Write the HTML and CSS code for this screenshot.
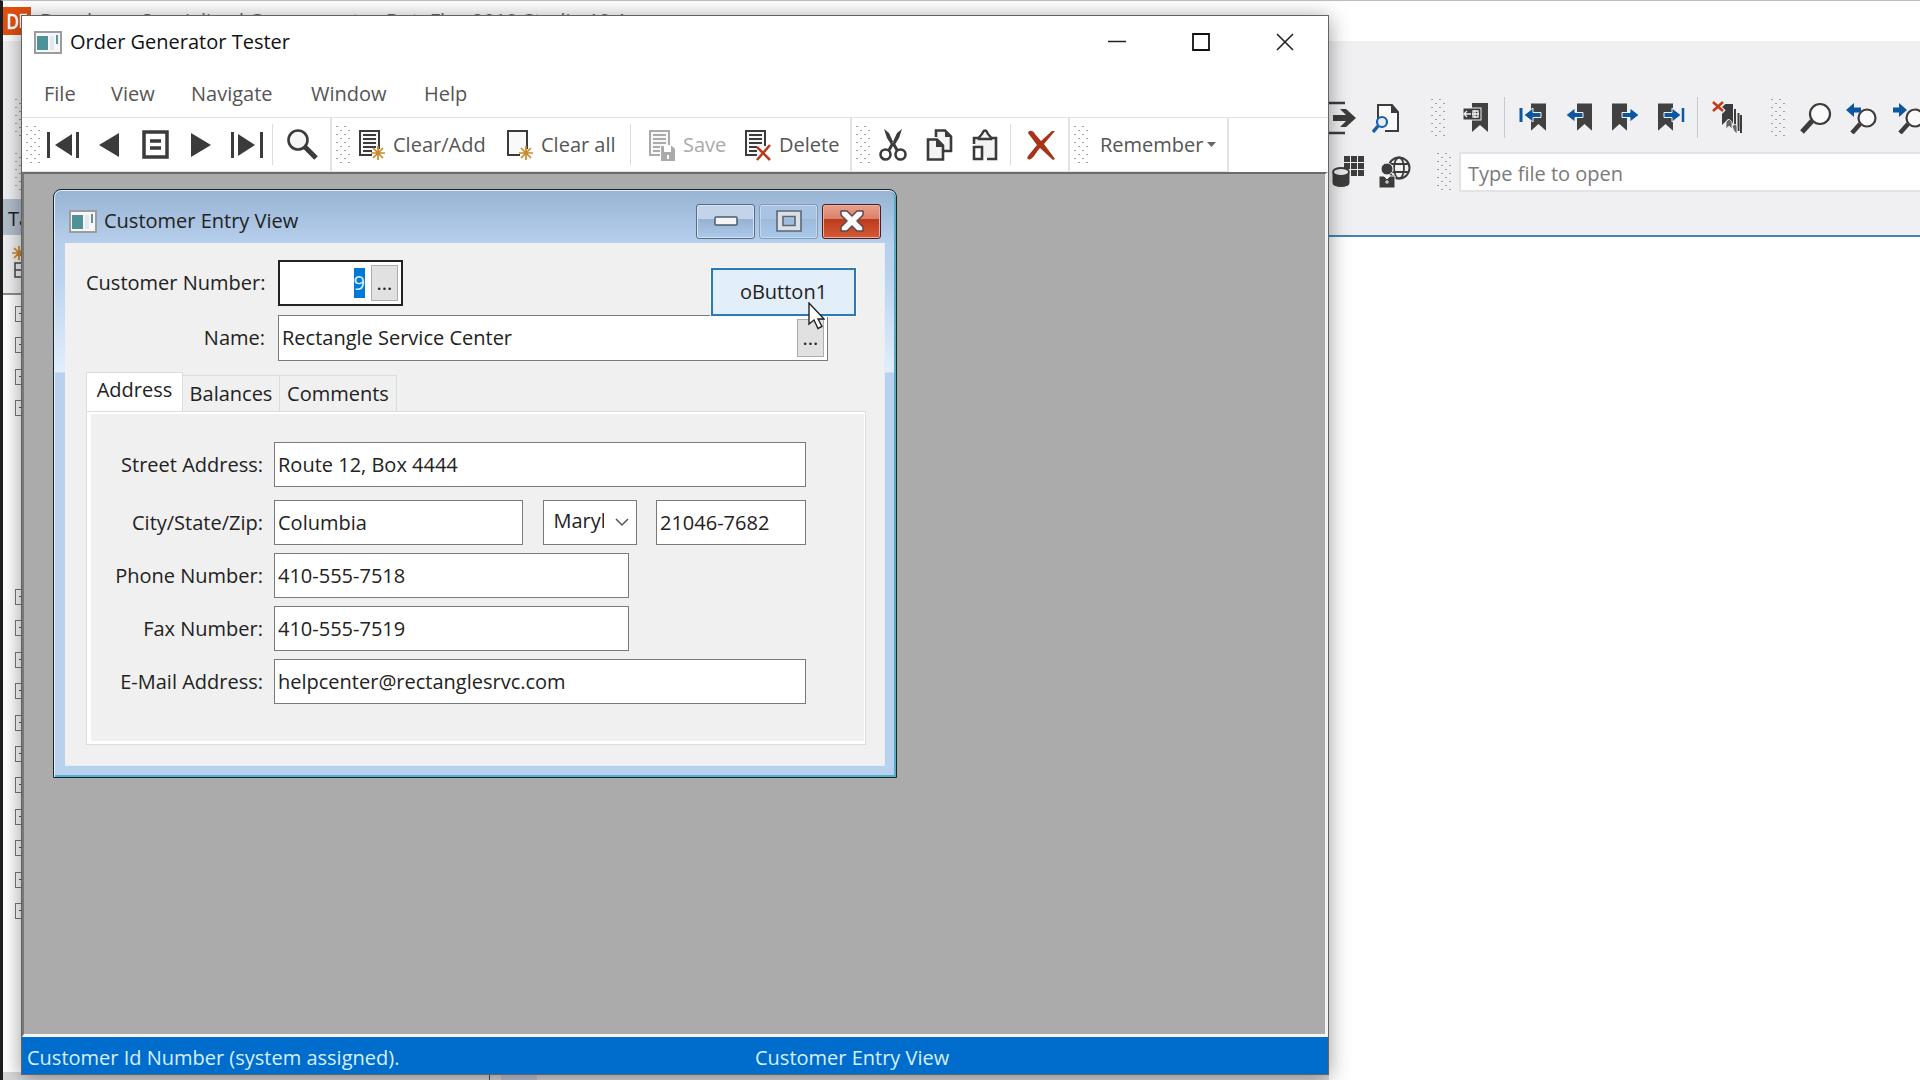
FILE: index.html
```html
<!DOCTYPE html>
<html lang="en">
<head>
<meta charset="utf-8">
<title>Order Generator Tester</title>
<link rel="stylesheet" href="styles.css">
</head>
<body>
<svg width="0" height="0" class="defs" aria-hidden="true">
  <defs>
    <symbol id="appicon" viewBox="0 0 28 23">
      <rect x="1" y="1" width="26" height="21" fill="#f4f6f8" stroke="#9c9c9c" stroke-width="2"/>
      <rect x="3" y="5" width="11" height="14" fill="#4c9297"/>
      <rect x="16" y="5" width="4" height="14" fill="#e3e7ee"/>
      <rect x="22" y="4" width="2" height="9" fill="#5f9396"/>
    </symbol>
    <symbol id="star" viewBox="0 0 14 14">
      <path d="M7 0v14M0 7h14M2 2l10 10M12 2L2 12" stroke="#c98a2b" stroke-width="1.7" fill="none"/>
    </symbol>
    <symbol id="sheet" viewBox="0 0 28 32">
      <path d="M2 2h19v24H2z" fill="#f7f7f7" stroke="currentColor" stroke-width="2"/>
      <path d="M5 6h13M5 10h13M5 14h13M5 18h13M5 22h9" stroke="currentColor" stroke-width="1.8"/>
    </symbol>
    <symbol id="bookmark" viewBox="0 0 16 30">
      <path d="M0 0h16v29l-8-7-8 7z" fill="#414141"/>
    </symbol>
    <pattern id="dots" width="8" height="8" patternUnits="userSpaceOnUse">
      <rect x="0" y="1" width="2" height="1" fill="#a0a0a0"/>
      <rect x="4" y="5" width="2" height="1" fill="#a0a0a0"/>
    </pattern>
  </defs>
</svg>

<div class="ide">
  <header class="ide-title">
    <svg class="ide-logo" viewBox="0 0 28 28" aria-hidden="true"><rect width="28" height="28" fill="#e2500f"/><path d="M6 8v13h3c4 0 5-3 5-6.500S13 8 9 8zM24 8h-6v13M18 14h5" fill="none" stroke="#fff" stroke-width="2.500"/></svg>
    <span>Developer Specialized Components - DataFlex 2019 Studio 19.1</span>
  </header>
  <div class="ide-bars">
    <div class="ide-row">
      <svg class="grip edge"><rect width="14" height="40" fill="url(#dots)"/></svg>
      <div class="ide-tools">
        <button class="ide-btn lead" aria-label="Go to"><svg width="34" height="34" viewBox="0 0 34 34"><path d="M0 2h18M0 32h18" stroke="#3c3c3c" stroke-width="2.500"/><path d="M6 14h13l-6-6h6l10 9-10 9h-6l6-6H6z" fill="#3c3c3c"/></svg></button>
        <button class="ide-btn" aria-label="Preview"><svg width="28" height="30" viewBox="0 0 28 30"><path d="M6 16V2h14l6 7v19H13" fill="#fafafa" stroke="#3c3c3c" stroke-width="2"/><path d="M19 1v9h8z" fill="#3c3c3c"/><circle cx="10" cy="19" r="5" fill="#e6eef8" stroke="#1b5faa" stroke-width="2.200"/><path d="M6 23l-5 6" stroke="#1b5faa" stroke-width="3.500"/></svg></button>
        <svg class="grip mid first"><rect width="14" height="40" fill="url(#dots)"/></svg>
        <button class="ide-btn" aria-label="Toggle bookmark"><svg width="28" height="30" viewBox="0 0 28 30"><use href="#bookmark" x="9" width="18" height="30"/><rect x="1" y="5" width="18" height="12" fill="#3c3c3c" stroke="#f2f2f2"/><path d="M3 11h6M5 8l-3 3 3 3M11 8h5v6h-5zM13 7v8M10 11h7" stroke="#f2f2f2" stroke-width="1.300" fill="none"/></svg></button>
        <span class="ide-sep"></span>
        <button class="ide-btn" aria-label="First bookmark"><svg width="28" height="30" viewBox="0 0 28 30"><use href="#bookmark" x="12" width="15" height="29"/><path d="M2 5v14" stroke="#0d56a0" stroke-width="3"/><path d="M22 9.500h-8V5L5 12l9 7v-4.500h8z" fill="#0d56a0" stroke="#f0f0f2"/></svg></button>
        <button class="ide-btn" aria-label="Previous bookmark"><svg width="28" height="30" viewBox="0 0 28 30"><use href="#bookmark" x="12" width="15" height="29"/><path d="M18 9.500h-8V5L1 12l9 7v-4.500h8z" fill="#0d56a0" stroke="#f0f0f2"/></svg></button>
        <button class="ide-btn" aria-label="Next bookmark"><svg width="28" height="30" viewBox="0 0 28 30"><use href="#bookmark" x="1" width="15" height="29"/><path d="M11 9.500h8V5l9 7-9 7v-4.500h-8z" fill="#0d56a0" stroke="#f0f0f2"/></svg></button>
        <button class="ide-btn" aria-label="Last bookmark"><svg width="28" height="30" viewBox="0 0 28 30"><use href="#bookmark" x="1" width="15" height="29"/><path d="M7 9.500h8V5l9 7-9 7v-4.500H7z" fill="#0d56a0" stroke="#f0f0f2"/><path d="M26 5v14" stroke="#0d56a0" stroke-width="2.500"/></svg></button>
        <span class="ide-sep tight"></span>
        <button class="ide-btn wide" aria-label="Clear bookmarks"><svg width="30" height="34" viewBox="0 0 30 34"><path d="M10 3h11v20l-5-5-6 6z" fill="#3c3c3c"/><path d="M23 8v20M26.500 12v18M29 14v18" stroke="#3c3c3c" stroke-width="2"/><path d="M14 21l3-3 3 3v7l-3-3-3 3zM20 25l3-2 2 2v8l-3-3z" fill="#666" stroke="#f0f0f2" stroke-width=".8"/><path d="M1 1l11 10M12 1L1 11" stroke="#f0f0f2" stroke-width="5"/><path d="M1 1l10 9M11 1L1 10" stroke="#c23b17" stroke-width="2.500"/></svg></button>
        <svg class="grip mid"><rect width="14" height="40" fill="url(#dots)"/></svg>
        <button class="ide-btn" aria-label="Find"><svg width="32" height="32" viewBox="0 0 32 32"><circle cx="20" cy="12" r="10" fill="#fafafa" stroke="#3c3c3c" stroke-width="2.200"/><path d="M12 19L2 30" stroke="#3c3c3c" stroke-width="5"/></svg></button>
        <button class="ide-btn" aria-label="Find previous"><svg width="32" height="32" viewBox="0 0 32 32"><circle cx="21" cy="16" r="8.500" fill="#fafafa" stroke="#3c3c3c" stroke-width="2.200"/><path d="M14 22l-8 9" stroke="#3c3c3c" stroke-width="4.500"/><path d="M15 5.500H8V1L0 8l8 7v-4.500h7z" fill="#0d56a0"/></svg></button>
        <button class="ide-btn" aria-label="Find next"><svg width="32" height="32" viewBox="0 0 32 32"><circle cx="23" cy="16" r="8.500" fill="#fafafa" stroke="#3c3c3c" stroke-width="2.200"/><path d="M16 22l-8 9" stroke="#3c3c3c" stroke-width="4.500"/><path d="M1 5.500h6V1l8 7-8 7v-4.500H1z" fill="#0d56a0"/></svg></button>
      </div>
    </div>
    <div class="ide-row second">
      <svg class="grip edge"><rect width="14" height="40" fill="url(#dots)"/></svg>
      <div class="ide-tools">
        <button class="ide-btn" aria-label="Database"><svg width="34" height="34" viewBox="0 0 34 34"><path d="M13 1h6v6h-6zM20 1h6v6h-6zM27 1h6v6h-6zM20 8h6v6h-6zM27 8h6v6h-6zM27 15h6v6h-6zM20 15h6v6h-6zM13 8h6v6h-6z" fill="#3c3c3c"/><path d="M1 17v11c0 6 18 6 18 0V17z" fill="#3c3c3c" stroke="#f0f0f2"/><ellipse cx="10" cy="17" rx="8" ry="4" fill="#e8e8ea" stroke="#3c3c3c" stroke-width="1.800"/></svg></button>
        <button class="ide-btn" aria-label="Web user"><svg width="34" height="34" viewBox="0 0 34 34"><circle cx="22" cy="13" r="10.500" fill="#f0f0f2" stroke="#3c3c3c" stroke-width="2"/><ellipse cx="22" cy="13" rx="5" ry="10.500" fill="none" stroke="#3c3c3c" stroke-width="1.800"/><path d="M12 9h20M12 17h20" stroke="#3c3c3c" stroke-width="1.800"/><circle cx="10" cy="14" r="6" fill="#3c3c3c" stroke="#f0f0f2"/><path d="M2 21h5l3 3 3-3h5v12H2z" fill="#3c3c3c" stroke="#f0f0f2"/><path d="M8 27h4M10 25v4" stroke="#f0f0f2"/></svg></button>
        <svg class="grip mid open"><rect width="14" height="40" fill="url(#dots)"/></svg>
        <input class="ide-open" type="text" placeholder="Type file to open" aria-label="Type file to open">
      </div>
    </div>
  </div>
  <div class="ide-body">
    <aside class="ide-side">
      <div class="side-head">Ta</div>
      <div class="side-tools"><svg width="19" height="34" viewBox="0 0 19 34"><use href="#star" x="9" y="1" width="14" height="14"/><path d="M19 18h-7v14h7M12 25h7" fill="none" stroke="#444" stroke-width="1.500"/></svg></div>
      <div class="tree"><i></i><i></i><i></i><i></i></div>
      <div class="tree low"><i></i><i></i><i></i><i></i><i></i><i></i><i></i><i></i><i></i><i></i><i></i></div>
    </aside>
    <div class="ide-editor"></div>
  </div>
  <footer class="ide-foot"><span></span></footer>
</div>

<main class="win">
  <header class="win-title">
    <svg class="appicon" aria-hidden="true"><use href="#appicon"/></svg>
    <h1>Order Generator Tester</h1>
    <button class="cap" aria-label="Minimize"><svg width="18" height="18" viewBox="0 0 18 18"><path d="M0 8.500h18" stroke="#222" stroke-width="1.500"/></svg></button>
    <button class="cap" aria-label="Maximize"><svg width="18" height="18" viewBox="0 0 18 18"><path d="M1 1h16v16H1z" fill="none" stroke="#111" stroke-width="1.800"/></svg></button>
    <button class="cap" aria-label="Close"><svg width="18" height="18" viewBox="0 0 18 18"><path d="M1 1l16 16M17 1L1 17" stroke="#222" stroke-width="1.600"/></svg></button>
  </header>
  <nav class="menu">
    <button class="m-file">File</button><button class="m-view">View</button><button class="m-nav">Navigate</button><button class="m-window">Window</button><button class="m-help">Help</button>
  </nav>
  <div class="bars">
    <div class="group">
      <svg class="grip"><rect width="14" height="40" fill="url(#dots)"/></svg>
      <button class="tool" aria-label="First"><svg width="32" height="28" viewBox="0 0 32 28"><path d="M1.500 1v26M30.500 1v26" stroke="#3b3b3b" stroke-width="3"/><path d="M25 3v22L8 14z" fill="#3b3b3b"/></svg></button>
      <button class="tool" aria-label="Previous"><svg width="20" height="24" viewBox="0 0 20 24"><path d="M20 0v24L0 12z" fill="#3b3b3b"/></svg></button>
      <button class="tool" aria-label="List"><svg width="27" height="29" viewBox="0 0 27 29"><path d="M2 2h23v25H2z" fill="none" stroke="#3b3b3b" stroke-width="3.500"/><path d="M8 11h11M8 18h11" stroke="#3b3b3b" stroke-width="3.500"/></svg></button>
      <button class="tool" aria-label="Next"><svg width="20" height="24" viewBox="0 0 20 24"><path d="M0 0v24l20-12z" fill="#3b3b3b"/></svg></button>
      <button class="tool" aria-label="Last"><svg width="32" height="28" viewBox="0 0 32 28"><path d="M1.500 1v26M30.500 1v26" stroke="#3b3b3b" stroke-width="3"/><path d="M7 3v22l17-11z" fill="#3b3b3b"/></svg></button>
      <span class="sep"></span>
      <button class="tool big" aria-label="Find"><svg width="31" height="31" viewBox="0 0 31 31"><circle cx="11" cy="11" r="9.500" fill="#f6f6f6" stroke="#3b3b3b" stroke-width="2.600"/><path d="M17 17l12 12" stroke="#3b3b3b" stroke-width="5"/></svg></button>
    </div>
    <div class="group">
      <svg class="grip"><rect width="14" height="40" fill="url(#dots)"/></svg>
      <button class="ltool w-add"><svg width="28" height="32" viewBox="0 0 28 32"><use href="#sheet"/><path d="M14 20h14v12H14z" fill="#fff"/><use href="#star" x="13" y="17" width="14" height="14"/></svg>Clear/Add</button>
      <button class="ltool w-all"><svg width="28" height="32" viewBox="0 0 28 32"><path d="M2 2h19v24H2z" fill="#f9f9f9" stroke="#3b3b3b" stroke-width="2"/><path d="M14 20h14v12H14z" fill="#fff"/><use href="#star" x="13" y="17" width="14" height="14"/></svg>Clear all</button>
      <span class="sep gap"></span>
      <button class="ltool w-save" disabled><svg width="28" height="32" viewBox="0 0 28 32"><use href="#sheet"/><path d="M12 16h16v16H12z" fill="#fff"/><path d="M13 17h11l3 3v12H13z" fill="currentColor"/><path d="M16 17h7v6h-7z" fill="#fff"/><path d="M19 26h2v4h-2z" fill="#fff"/></svg>Save</button>
      <button class="ltool w-del"><svg width="28" height="32" viewBox="0 0 28 32"><use href="#sheet"/><path d="M13 17h12v12H13z" fill="#fff"/><path d="M13 18l13 13M26 16L13 31" stroke="#b93a1e" stroke-width="2.500"/></svg>Delete</button>
    </div>
    <div class="group">
      <svg class="grip"><rect width="14" height="40" fill="url(#dots)"/></svg>
      <button class="tool" aria-label="Cut"><svg width="28" height="32" viewBox="0 0 28 32"><path d="M5 0l3 9 5 8h3L10 4zM23 0l-3 9-5 8h-3l6-13z" fill="#3b3b3b"/><path d="M14 14l-4 7M14 14l4 7" stroke="#3b3b3b" stroke-width="3"/><circle cx="6.500" cy="25.500" r="5" fill="none" stroke="#3b3b3b" stroke-width="2.600"/><circle cx="21.500" cy="25.500" r="5" fill="none" stroke="#3b3b3b" stroke-width="2.600"/></svg></button>
      <button class="tool" aria-label="Copy"><svg width="27" height="32" viewBox="0 0 27 32"><path d="M10 8V1.500h9l6 6V22h-7" fill="#f3f3f3" stroke="#3b3b3b" stroke-width="2.600"/><path d="M19 1v7h7z" fill="#3b3b3b"/><path d="M2 10.500h9l6 6v14H2z" fill="#f3f3f3" stroke="#3b3b3b" stroke-width="2.600"/><path d="M10 10v8h8z" fill="#3b3b3b"/></svg></button>
      <button class="tool" aria-label="Paste"><svg width="26" height="32" viewBox="0 0 26 32"><path d="M2 15V9h22v21h-9" fill="#f3f3f3" stroke="#3b3b3b" stroke-width="2.600"/><path d="M7 10c0-4 3-3 4-7 1-2 3-2 4 0 1 4 4 3 4 7z" fill="#f3f3f3" stroke="#3b3b3b" stroke-width="2.500"/><path d="M2 18h8v12H2z" fill="#fff" stroke="#3b3b3b" stroke-width="2.600"/></svg></button>
      <span class="sep"></span>
      <button class="tool big" aria-label="Cancel"><svg width="30" height="30" viewBox="0 0 30 30"><path d="M2 3c1-4 6-2 7 1l6 7 11-10h3L18 14l11 15-2 1-13-12C10 22 9 26 6 28c-3 3-6 1-4-2l9-11z" fill="#a6331a"/></svg></button>
    </div>
    <div class="group">
      <svg class="grip"><rect width="14" height="40" fill="url(#dots)"/></svg>
      <button class="ltool w-rem">Remember<svg width="9" height="5" viewBox="0 0 9 5"><path d="M0 0h9L4.500 5z" fill="#666"/></svg></button>
    </div>
  </div>

  <div class="mdi">
    <section class="view">
      <header class="view-title">
        <svg class="appicon" aria-hidden="true"><use href="#appicon"/></svg>
        <h2>Customer Entry View</h2>
        <button class="vcap strong" aria-label="Minimize view"><svg width="24" height="10" viewBox="0 0 24 10"><rect x="1" y="1" width="22" height="8" rx="1" fill="#f5f5f5" stroke="#4d5a6b" stroke-width="1.500"/></svg></button>
        <button class="vcap" aria-label="Maximize view"><svg width="26" height="22" viewBox="0 0 26 22"><path d="M1 1h24v20H1zM7 6.500v9h12v-9z" fill="#dcdfe4" fill-rule="evenodd" stroke="#5c6776" stroke-width="1.600"/></svg></button>
        <button class="vcap close" aria-label="Close view"><svg width="26" height="22" viewBox="0 0 26 22"><path d="M2 1h6l5 5 5-5h6v4l-6 6 6 6v4h-6l-5-5-5 5H2v-4l6-6-6-6z" fill="#fafafa" stroke="#5b4a52" stroke-width="1.500" stroke-linejoin="round"/></svg></button>
      </header>
      <form class="view-body" onsubmit="return false">
        <div class="head">
          <label for="num">Customer Number:</label>
          <div class="prompt number"><input id="num" type="text" value="9"><button type="button" aria-label="Find customer number">...</button></div>
          <label for="name">Name:</label>
          <div class="prompt"><input id="name" type="text" value="Rectangle Service Center"><button type="button" aria-label="Find name">...</button></div>
        </div>
        <button class="obutton" type="button">oButton1</button>
        <svg class="cursor" viewBox="0 0 17 28" aria-hidden="true"><path d="M1 1v21l5-4 4 8.500 4-2-4-7.500h6z" fill="#fff" stroke="#222" stroke-width="1.400"/></svg>
        <div class="tabs" role="tablist">
          <button type="button" class="tab on" role="tab" aria-selected="true">Address</button><button type="button" class="tab t2" role="tab">Balances</button><button type="button" class="tab t3" role="tab">Comments</button>
        </div>
        <div class="page" role="tabpanel">
          <label for="street">Street Address:</label>
          <input id="street" class="field" type="text" value="Route 12, Box 4444">
          <label for="city" class="apart">City/State/Zip:</label>
          <div class="csz apart">
            <input id="city" class="field" type="text" value="Columbia">
            <div class="combo"><select aria-label="State"><option>Maryland</option></select><svg width="14" height="9" viewBox="0 0 14 9" aria-hidden="true"><path d="M1 1l6 6 6-6" fill="none" stroke="#555" stroke-width="1.500"/></svg></div>
            <input class="field" type="text" value="21046-7682" aria-label="Zip">
          </div>
          <label for="phone">Phone Number:</label>
          <input id="phone" class="field short" type="text" value="410-555-7518">
          <label for="fax">Fax Number:</label>
          <input id="fax" class="field short" type="text" value="410-555-7519">
          <label for="mail">E-Mail Address:</label>
          <input id="mail" class="field" type="text" value="helpcenter@rectanglesrvc.com">
        </div>
      </form>
    </section>
  </div>
  <footer class="status"><span>Customer Id Number (system assigned).</span><span>Customer Entry View</span></footer>
</main>
<script src="main.js"></script>
</body>
</html>
```
FILE: styles.css
```css
* { box-sizing: border-box; }
html, body { height: 100%; }
body {
  margin: 0;
  overflow: hidden;
  font: 20px/30px "Open Sans", "Noto Sans", sans-serif;
  color: #222;
  background: #fff;
}
button, input, select { font: inherit; color: inherit; margin: 0; padding: 0; border: 0; background: none; border-radius: 0; outline: 0; }
h1, h2 { margin: 0; font: inherit; }
svg { display: block; flex: none; }
.defs { position: absolute; }
.grip { width: 14px; height: 40px; }

/* background studio */
.ide { display: flex; flex-direction: column; height: 100vh; border-left: 3px solid #1d1d1f; border-top: 1px solid #bdbdbd; }
.ide-title { display: flex; align-items: center; gap: 9px; height: 40px; background: #fff; color: #666; }
.ide-logo { width: 28px; height: 28px; }
.ide-bars { display: flex; flex-direction: column; height: 196px; padding-top: 54px; background: #f0f0f2; border-bottom: 2px solid #3f86b5; }
.ide-row { display: flex; align-items: center; justify-content: space-between; height: 45px; }
.ide-row.second { margin-top: 9px; }
.grip.edge { margin-left: 12px; }
.ide-tools { display: flex; align-items: center; width: 595px; }
.ide-btn { display: flex; align-items: center; justify-content: center; width: 46px; height: 40px; flex: none; }
.ide-btn.lead { width: 38px; }
.ide-btn.wide { width: 56px; }
.grip.mid { margin: 0 8px 0 16px; }
.grip.mid.first { margin: 0 8px 0 22px; }
.grip.mid.open { margin: 0 8px 0 20px; }
.ide-sep { width: 1px; height: 41px; margin: 0 5px; background: #c9c9cd; flex: none; }
.ide-sep.tight { margin: 0 1px 0 3px; }
.ide-open { flex: 1; height: 40px; padding: 3px 7px 0; background: #fff; border: 2px solid #e3e3e6; border-right: 0; }
.ide-open::placeholder { color: #7a7a7a; opacity: 1; }
.ide-body { display: flex; flex: 1; min-height: 0; }
.ide-side { width: 1326px; margin-top: -38px; background: #fff; }
.side-head { height: 36px; padding: 5px 5px 0; background: #b4bfcd; }
.side-tools { height: 60px; padding-top: 10px; background: #f0f0f2; border-bottom: 2px solid #8d8d8d; }
.tree { display: grid; align-content: space-between; height: 110px; margin: 11px 12px 0; }
.tree.low { height: 330px; margin-top: 173px; }
.tree i { width: 16px; height: 16px; border: 1px solid #777; background: linear-gradient(#555, #555) 3px 6px / 8px 1px no-repeat; }
.ide-editor { flex: 1; }
.ide-foot { width: 1326px; height: 8px; background: #d8d8d8; }
.ide-foot span { display: block; width: 48px; height: 8px; margin-left: 486px; background: linear-gradient(90deg, #555 1px, #d8d8d8 1px 12px, #c0c4d4 12px); }

/* main window */
.win {
  position: absolute;
  left: 21px;
  top: 15px;
  display: flex;
  flex-direction: column;
  width: calc(100vw - 612px);
  height: calc(100vh - 20px);
  background: #fff;
  border: 1px solid #5f6468;
  box-shadow: 0 3px 20px rgba(0, 0, 0, .4);
}
.win-title { display: flex; align-items: center; height: 52px; padding: 0 1px 0 12px; color: #111; }
.appicon { width: 28px; height: 23px; margin-right: 8px; }
.win-title h1 { flex: 1; }
.cap { display: flex; align-items: center; justify-content: center; width: 84px; height: 52px; }
.menu { display: flex; height: 49px; padding-left: 22px; color: #555; }
.menu button { height: 52px; text-align: left; }
.m-file { width: 67px; }
.m-view { width: 80px; }
.m-nav { width: 120px; }
.m-window { width: 113px; }
.m-help { width: 60px; }
.bars { display: flex; height: 55px; color: #555; border-top: 1px solid #e2e2e2; }
.group { display: flex; align-items: center; padding-left: 4px; border-right: 2px solid #e2e2e2; border-bottom: 1px solid #e2e2e2; }
.tool { display: flex; align-items: center; justify-content: center; width: 46px; height: 50px; }
.tool.big { width: 55px; }
.sep { width: 1px; height: 41px; margin: 0 2px; background: #dcdcdc; }
.sep.gap { margin-right: 9px; }
.ltool { display: flex; align-items: center; gap: 7px; height: 50px; padding-left: 8px; white-space: nowrap; }
.ltool svg { color: #3b3b3b; }
.ltool:disabled, .ltool:disabled svg { color: #aaa; }
.w-add { width: 148px; }
.w-all { width: 130px; }
.w-save { width: 96px; }
.w-del { width: 114px; }
.w-rem { width: 139px; padding-left: 12px; gap: 4px; }
.mdi {
  flex: 1;
  min-height: 0;
  padding: 15px 29px;
  background: #ababab;
  border: solid;
  border-width: 2px 3px 3px 2px;
  border-color: #6b6b6b #f4f4f4 #f4f4f4 #777;
}
.status { display: flex; height: 37px; padding: 6px 5px 0; color: #d5f0ff; background: #006dcc; }
.status span:first-child { width: 728px; }

/* child window */
.view {
  position: relative;
  width: 844px;
  padding: 0 11px 11px;
  border: 1px solid #16262e;
  border-radius: 8px 8px 0 0;
  box-shadow: inset 0 1px #e6eefa, inset 1px 0 #e6eefa, inset -2px 0 #55aeca, inset 0 -2px #55aeca;
  background: linear-gradient(#98b4d3 0, #b6cfec 54px, #bcd4f0 90px, #e2eefc 182px, #b8d1ee 183px);
}
.view-title { display: flex; align-items: center; gap: 4px; height: 53px; padding: 9px 4px 0; }
.view-title h2 { flex: 1; }
.view-title .appicon { margin-right: 3px; }
.vcap {
  display: flex; align-items: center; justify-content: center;
  width: 59px; height: 35px;
  border: 1px solid #7f9cbc;
  border-radius: 3px;
  box-shadow: inset 0 0 0 1px rgba(255, 255, 255, .35);
  background: linear-gradient(#a9c4e3 0 14px, #9dbbdc 14px, #a9c7e8);
}
.vcap.strong { border-color: #566c87; box-shadow: inset 0 0 0 1px #d5e3f4; background: linear-gradient(#c2d3ea 0 14px, #96b1d2 14px, #adc9ea); }
.vcap.close { border-color: #4b1f20; box-shadow: inset 0 0 0 1px #eab1a2; background: linear-gradient(#e9a08d 0, #d98068 14px, #bd3a1b 14px, #d45b35); }
.view-body { padding: 17px 18px 20px 21px; background: #f0f0f0; border: solid #e3edf8; border-width: 0 1px 1px 0; }
.head { display: grid; grid-template-columns: 179px 550px; column-gap: 13px; row-gap: 9px; align-items: center; }
.head label, .page label { text-align: right; white-space: nowrap; }
.prompt { display: flex; height: 46px; padding: 3px; background: #fff; border: 1px solid #7a7a7a; }
.prompt input { flex: 1; min-width: 0; }
.prompt button { width: 27px; background: #e1e1e1; border: 1px solid #adadad; }
.prompt.number { width: 125px; border: 2px solid #222; }
.prompt.number input { padding-right: 6px; text-align: right; }
#num::selection { color: #d9f1ff; background: #0078d7; }
.obutton {
  position: absolute;
  right: 40px;
  top: 78px;
  width: 145px;
  height: 48px;
  background: #e2effb;
  border: 2px solid #2a7ab8;
  outline: 1px solid #f6fafd;
}
.cursor { position: absolute; left: 754px; top: 112px; width: 17px; height: 28px; }
.tabs { display: flex; align-items: flex-end; height: 39px; margin-top: 11px; }
.tab { height: 36px; margin-bottom: 0; text-align: center; border: 1px solid #dcdcdc; border-bottom: 0; border-left: 0; }
.tab.on { width: 97px; height: 39px; padding-bottom: 4px; background: #fff; border-left: 1px solid #dcdcdc; }
.t2 { width: 97px; }
.t3 { width: 117px; }
.page {
  display: grid;
  grid-template-columns: 176px 532px;
  column-gap: 11px;
  row-gap: 8px;
  align-items: center;
  padding: 30px 0 40px;
  border: 1px solid #dcdcdc;
  box-shadow: inset 4px 0 #fff, inset -1px 0 #fff, inset 0 2px #fff, inset 0 -3px #fff;
}
.field { width: 100%; height: 45px; padding: 0 3px; background: #fff; border: 1px solid #7a7a7a; }
.field.short { width: 355px; }
.apart { margin-top: 5px; }
.csz { display: grid; grid-template-columns: 249px 94px 150px; justify-content: space-between; }
.combo { display: grid; background: #fff; border: 1px solid #7a7a7a; }
.combo select { grid-area: 1 / 1; width: 92px; height: 39px; padding: 0 32px 0 10px; appearance: none; }
.combo svg { grid-area: 1 / 1; align-self: center; justify-self: end; margin-right: 7px; }
```
FILE: main.js
```js
// The customer number starts out selected, ready to be typed over.
const num = document.getElementById("num");
num.focus();
num.select();
```
